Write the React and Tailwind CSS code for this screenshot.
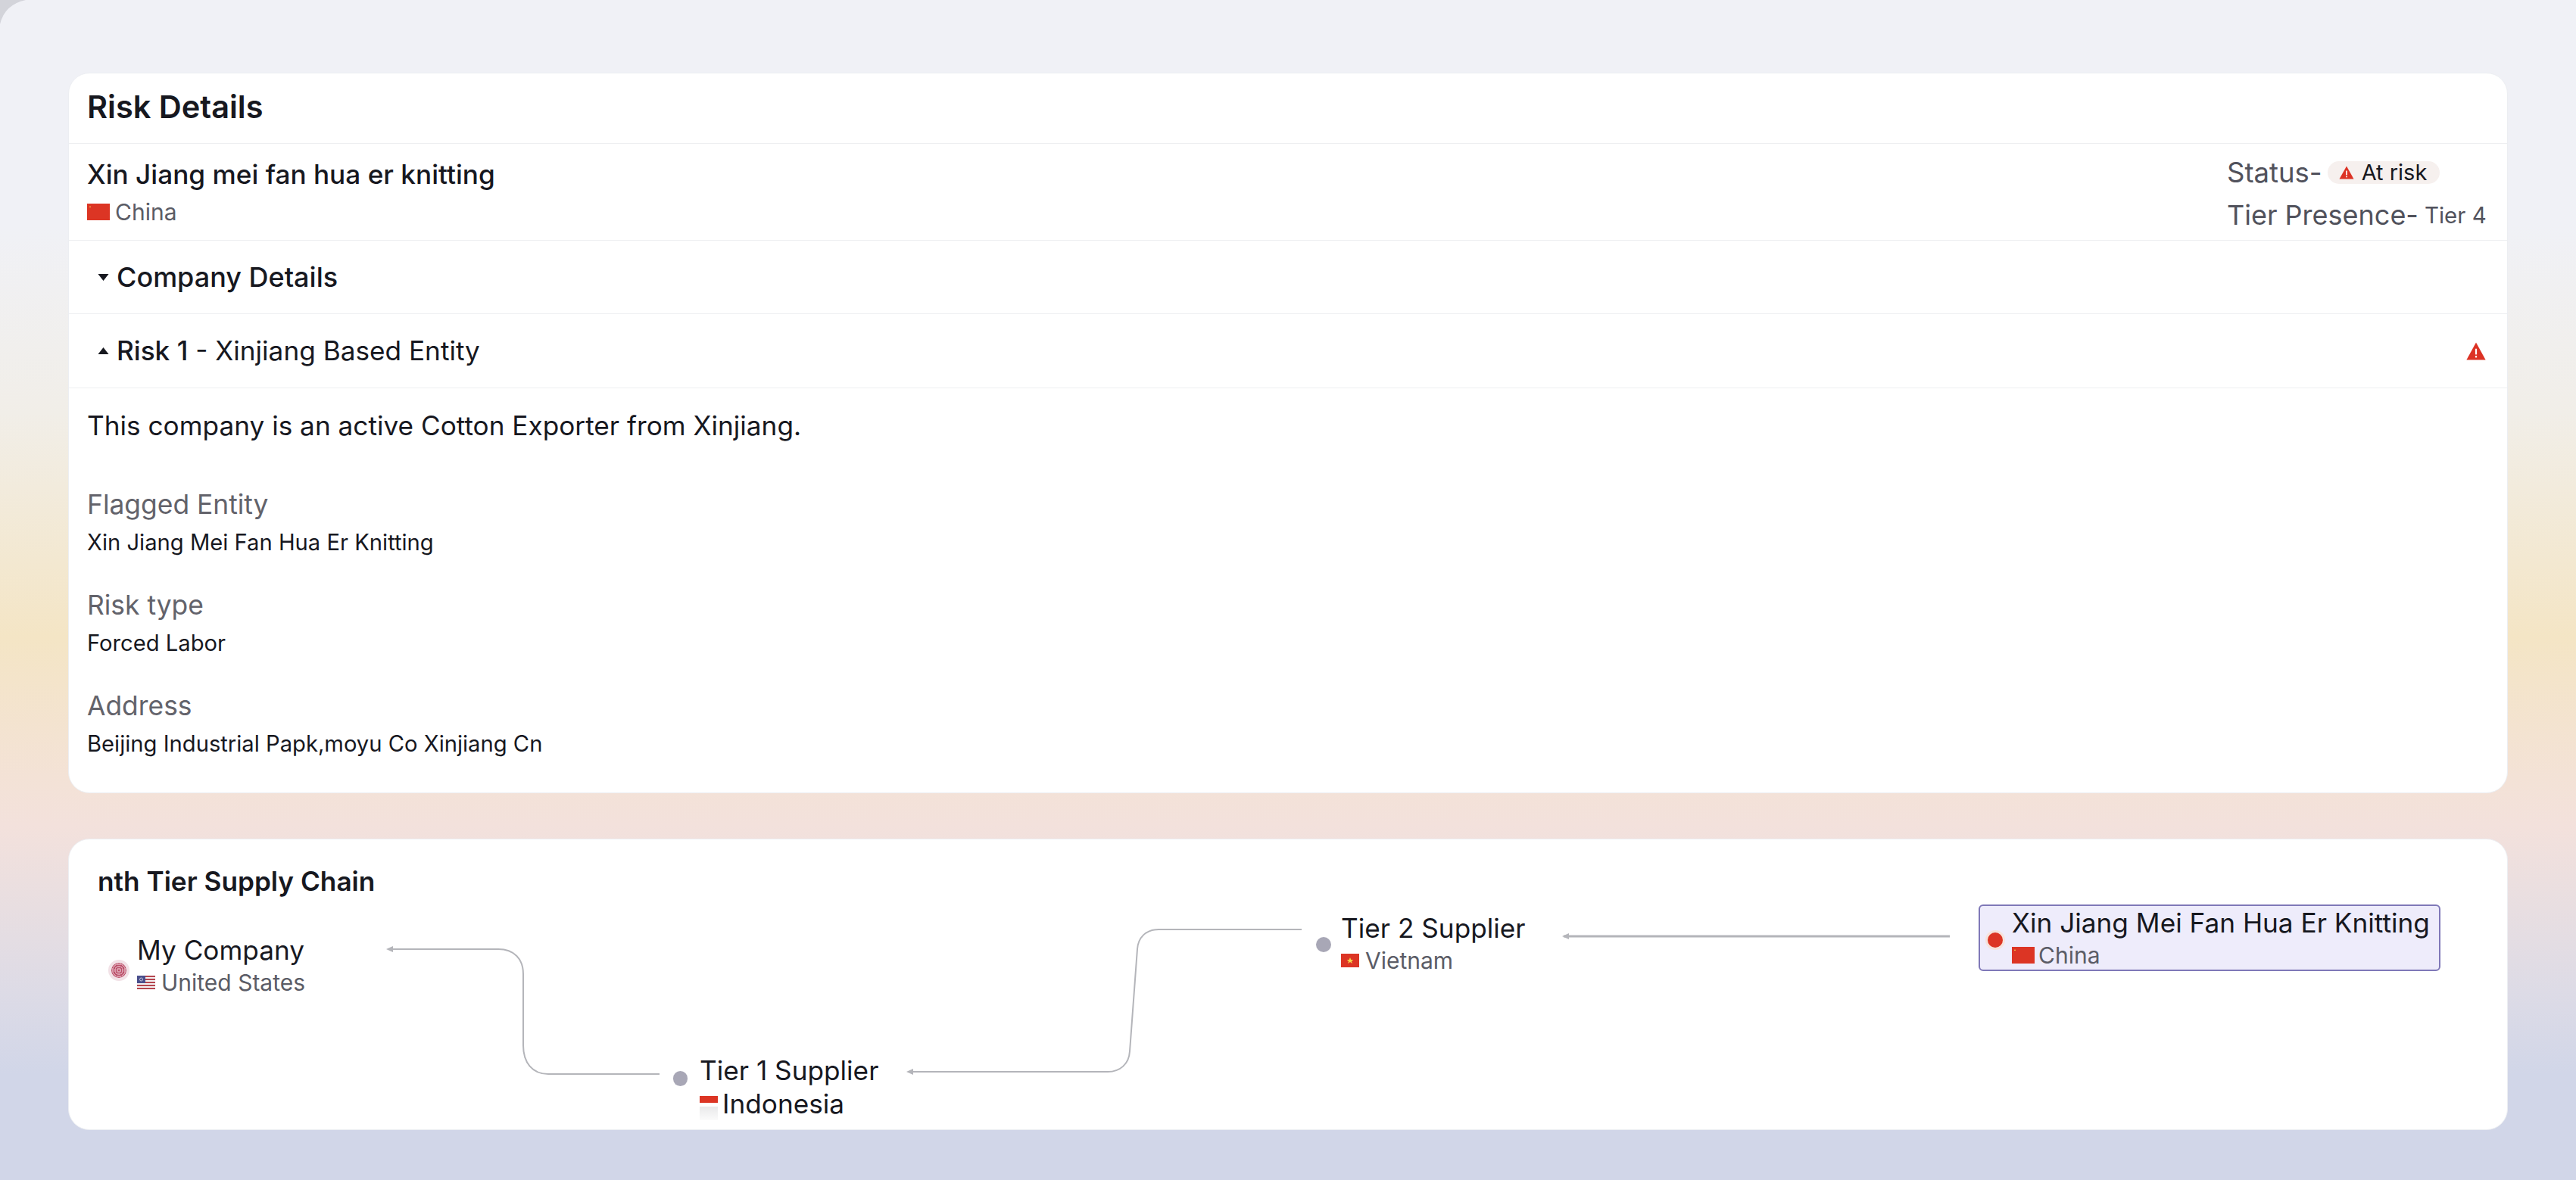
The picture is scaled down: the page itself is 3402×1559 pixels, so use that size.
const F = "font-['Inter',sans-serif]";

function Warn({ className }) {
  return (
    <svg viewBox="0 0 24 22" className={className}>
      <path d="M12 0.5 L23.6 21.5 L0.4 21.5 Z" fill="#dc3224" />
      <rect x="11" y="8" width="2" height="7" fill="#fff" />
      <rect x="11" y="16.5" width="2" height="2.2" fill="#fff" />
    </svg>
  );
}

function ChinaFlag({ className }) {
  return (
    <svg viewBox="0 0 30 22" className={className}>
      <rect width="30" height="22" fill="#dc3524" />
      <path d="M4 3 l1 2 l-2 -1 h2 l-2 1 Z" fill="#f6d64a" />
    </svg>
  );
}

function UsFlag() {
  return (
    <svg viewBox="0 0 24 18" className="w-[24px] h-[18px] shrink-0">
      <rect width="24" height="18" fill="#f4f2f4" />
      {[0, 4, 8, 12, 16].map((y) => (
        <rect key={y} y={y} width="24" height="2" fill="#b5464f" />
      ))}
      <rect width="11" height="10" fill="#4a4f8c" />
      <circle cx="5.5" cy="5" r="2" fill="none" stroke="#dfe0ee" strokeWidth="0.8" />
    </svg>
  );
}

function IdFlag() {
  return (
    <svg viewBox="0 0 24 32" className="w-[24px] h-[32px] shrink-0 translate-y-[6px] -my-[2px]">
      <defs>
        <linearGradient id="idfade" x1="0" y1="0" x2="0" y2="1">
          <stop offset="0" stopColor="#e9e9ea" />
          <stop offset="1" stopColor="#fbfbfb" />
        </linearGradient>
      </defs>
      <rect width="24" height="9" fill="#dc3524" />
      <rect y="14" width="24" height="18" fill="url(#idfade)" />
    </svg>
  );
}

function VnFlag() {
  return (
    <svg viewBox="0 0 24 18" className="w-[24px] h-[18px] shrink-0">
      <rect width="24" height="18" fill="#dc3524" />
      <path d="M12 5 l1.3 3 h3 l-2.4 2 l1 3 l-2.9 -1.9 l-2.9 1.9 l1 -3 l-2.4 -2 h3 Z" fill="#f6d64a" />
    </svg>
  );
}

function Row({ children, className = "" }) {
  return <div className={"flex items-center border-b border-[#eeeff1] " + className}>{children}</div>;
}

function Field({ label, value }) {
  return (
    <div className="flex flex-col">
      <div className="text-[35.4px] leading-[44px] text-[#63636b]">{label}</div>
      <div className="text-[29.2px] leading-[44px] mt-[6px] text-[#17181f]">{value}</div>
    </div>
  );
}

function Node({ dot, name, sub, flag, subClass = "gap-[8px] text-[30px] text-[#5b5c66]" }) {
  return (
    <div className="flex items-center">
      {dot}
      <div className="flex flex-col">
        <div className="text-[35.2px] leading-[46px] whitespace-nowrap text-[#17181f]">{name}</div>
        <div className={"flex items-center leading-[40px] whitespace-nowrap " + subClass}>
          {flag}
          <span>{sub}</span>
        </div>
      </div>
    </div>
  );
}

export default function App() {
  return (
    <div className={F + " relative w-[3402px] h-[1559px] overflow-hidden bg-[linear-gradient(180deg,#f0f1f6_0%,#f0f1f6_19%,#f1eee8_35%,#f4e5c5_54%,#f3e1dc_70%,#dddbe6_84%,#d1d6e8_91%,#d1d6e8_100%)] px-[90px] pt-[96px]"}>
      <svg className="absolute left-0 top-0" width="36" height="36">
        <path d="M0 0 H34 Q6 6 0 32 Z" fill="#d3d4da" />
      </svg>
      <div className="bg-white rounded-[28px] border border-[#eceef2] h-[952px] flex flex-col">
        <Row className="h-[93px] px-[24px]">
          <div className="text-[41.5px] font-semibold text-[#17181f] leading-none -mt-[2px]">Risk Details</div>
        </Row>
        <Row className="h-[128px] pl-[24px] pr-[27px] justify-between">
          <div className="flex flex-col">
            <div className="text-[35.2px] font-medium leading-[46px] text-[#17181f] -mt-[1px]">Xin Jiang mei fan hua er knitting</div>
            <div className="flex items-center gap-[7px] text-[30px] leading-[40px] text-[#5b5c66] mt-[7px]">
              <ChinaFlag className="w-[30px] h-[22px]" />
              <span>China</span>
            </div>
          </div>
          <div className="flex flex-col gap-[10px] whitespace-nowrap w-[343px] pt-[5px]">
            <div className="flex items-center text-[36.5px] leading-[46px] text-[#51525c]">
              <span>Status-</span>
              <span className="ml-[7px] flex items-center gap-[10px] bg-[#f6f0ee] rounded-full h-[30px] w-[148px] pl-[15px] text-[29px] text-[#17181f]">
                <Warn className="w-[20px] h-[18px]" />
                At risk
              </span>
            </div>
            <div className="flex items-center text-[36px] leading-[46px] text-[#51525c]">
              <span>Tier Presence-</span>
              <span className="ml-[8px] text-[29.5px]">Tier 4</span>
            </div>
          </div>
        </Row>
        <Row className="h-[97px] pl-[38px] gap-[10px]">
          <svg viewBox="0 0 14 9" className="w-[15px] h-[9px]"><path d="M0 0 H14 L7 9 Z" fill="#17181f" /></svg>
          <div className="text-[36px] font-medium text-[#17181f]">Company Details</div>
        </Row>
        <Row className="h-[98px] pl-[38px] pr-[27px] gap-[10px]">
          <svg viewBox="0 0 14 9" className="w-[15px] h-[9px]"><path d="M0 9 H14 L7 0 Z" fill="#17181f" /></svg>
          <div className="text-[35.2px] text-[#17181f] flex-1"><span className="font-medium">Risk 1</span> - Xinjiang Based Entity</div>
          <Warn className="w-[28px] h-[24px]" />
        </Row>
        <div className="pl-[24px] pt-[26px] flex flex-col gap-[39px]">
          <div className="text-[35.2px] leading-[46px] text-[#17181f] mb-[21px]">This company is an active Cotton Exporter from Xinjiang.</div>
          <Field label="Flagged Entity" value="Xin Jiang Mei Fan Hua Er Knitting" />
          <Field label="Risk type" value="Forced Labor" />
          <Field label="Address" value="Beijing Industrial Papk,moyu Co Xinjiang Cn" />
        </div>
      </div>

      <div className="relative mt-[60px] bg-white rounded-[28px] border border-[#eceef2] h-[385px]">
        <div className="absolute left-[38px] top-[32px] text-[35.2px] font-semibold leading-[46px] text-[#17181f]">nth Tier Supply Chain</div>

        <svg className="absolute left-0 top-0" width="3222" height="384" fill="none" stroke="#b4b5ba" strokeWidth="2">
          <path d="M780 310 H633 C612 310 600 295 600 272 V178 C600 158 588 145 567 145 H421" />
          <path d="M419 145 l9 -4 v8 Z" fill="#b4b5ba" stroke="none" />
          <path d="M1628 119 H1439 C1422 119 1412 130 1411 145 L1401 280 C1400 297 1388 307 1372 307 H1108" />
          <path d="M1106 307 l9 -4 v8 Z" fill="#b4b5ba" stroke="none" />
          <path d="M2484 128 H1974" strokeWidth="3" />
          <path d="M1972 128 l9 -4 v8 Z" fill="#b4b5ba" stroke="none" />
        </svg>

        <div className="absolute left-[56px] top-[123px]">
          <Node
            dot={<div className="w-[20px] h-[20px] rounded-full bg-[repeating-radial-gradient(circle,#bb4f69_0px,#bb4f69_1.5px,#d99aaa_1.5px,#d99aaa_3px)] ring-[4px] ring-[#f2e2e7] mr-[14px] mt-[14px]" />}
            name="My Company"
            sub="United States"
            flag={<UsFlag />}
          />
        </div>

        <div className="absolute left-[798px] top-[282px]">
          <Node
            dot={<div className="w-[19px] h-[20px] rounded-full bg-[#a8a7b6] mr-[16px] -mt-[19px]" />}
            name="Tier 1 Supplier"
            sub="Indonesia"
            subClass="gap-[6px] text-[#17181f] text-[35.2px] mt-[1px]"
            flag={<IdFlag />}
          />
        </div>

        <div className="absolute left-[1647px] top-[94px]">
          <Node
            dot={<div className="w-[20px] h-[20px] rounded-full bg-[#a8a7b6] mr-[13px] mt-[4px]" />}
            name="Tier 2 Supplier"
            sub="Vietnam"
            flag={<VnFlag />}
          />
        </div>

        <div className="absolute left-[2522px] top-[86px] w-[610px] h-[88px] rounded-[6px] border-2 border-[#7f78b8] bg-[#eeecfb] flex items-center pl-[10px]">
          <Node
            dot={<div className="w-[20px] h-[20px] rounded-full bg-[#dc3524] ring-[3px] ring-[#f6e3dc] mr-[12px] mt-[6px]" />}
            name="Xin Jiang Mei Fan Hua Er Knitting"
            sub="China"
            subClass="gap-[5px] text-[30px] text-[#5b5c66]"
            flag={<ChinaFlag className="w-[30px] h-[22px]" />}
          />
        </div>
      </div>
    </div>
  );
}
